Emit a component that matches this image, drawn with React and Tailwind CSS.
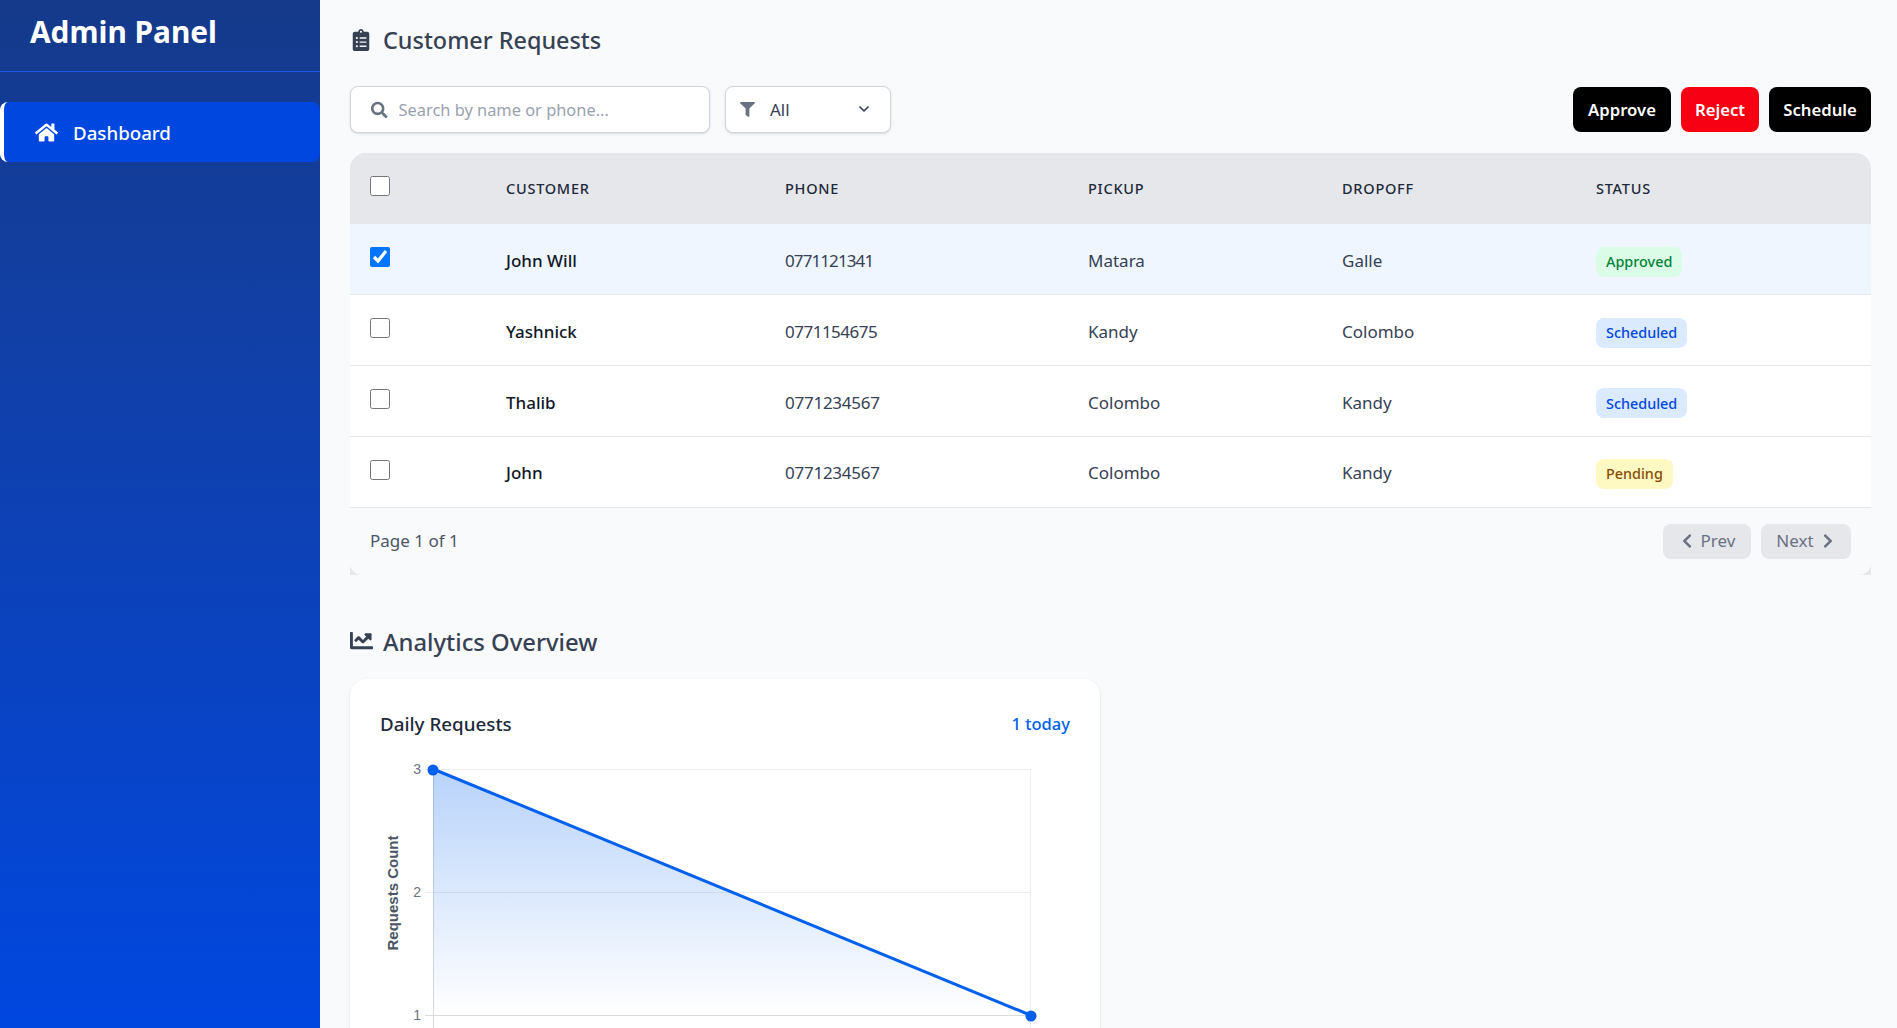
import React from "react";
import { FaClipboardList, FaSearch, FaFilter, FaHome, FaChartLine, FaChevronLeft, FaChevronRight } from "react-icons/fa";
import { ChevronDown } from "lucide-react";

const rows = [
  { name: "John Will", phone: "0771121341", phoneClass: "tracking-[-0.9px]", pickup: "Matara", dropoff: "Galle", status: "Approved", selected: true },
  { name: "Yashnick", phone: "0771154675", phoneClass: "tracking-[-0.5px]", pickup: "Kandy", dropoff: "Colombo", status: "Scheduled" },
  { name: "Thalib", phone: "0771234567", phoneClass: "tracking-[-0.25px]", pickup: "Colombo", dropoff: "Kandy", status: "Scheduled" },
  { name: "John", phone: "0771234567", phoneClass: "tracking-[-0.25px]", pickup: "Colombo", dropoff: "Kandy", status: "Pending" },
];

const badge = {
  Approved: "bg-green-100 text-green-700",
  Scheduled: "bg-[#dbeafe] text-[#0047e0]",
  Pending: "bg-yellow-100 text-yellow-800",
};

function Chart() {
  return (
    <svg width="690" height="330" className="block" viewBox="0 -10 690 330">
      <defs>
        <linearGradient id="fill" x1="0" y1="0" x2="0" y2="1">
          <stop offset="0" stopColor="#0060ee" stopOpacity="0.28" />
          <stop offset="1" stopColor="#0060ee" stopOpacity="0" />
        </linearGradient>
      </defs>
      <g stroke="#eceef2" strokeWidth="1">
        <line x1="45" y1="5.5" x2="650" y2="5.5" />
        <line x1="45" y1="128.5" x2="650" y2="128.5" />
        <line x1="650.5" y1="5" x2="650.5" y2="320" />
      </g>
      <line x1="45" y1="251.5" x2="650" y2="251.5" stroke="#d8dade" />
      <line x1="53.5" y1="5" x2="53.5" y2="320" stroke="#d8dade" />
      <polygon points="53,5 650,251 53,251" fill="url(#fill)" />
      <line x1="53" y1="5" x2="650" y2="251" stroke="#0060ee" strokeWidth="3" />
      <circle cx="53" cy="6" r="5.5" fill="#0060ee" />
      <circle cx="651" cy="252" r="5.5" fill="#0060ee" />
      <g fill="#6b7280" fontSize="14" fontFamily="'Liberation Sans', Arial, sans-serif" textAnchor="end">
        <text x="41" y="10">3</text>
        <text x="41" y="133">2</text>
        <text x="41" y="256">1</text>
      </g>
      <text
        transform="translate(18 129) rotate(-90)"
        textAnchor="middle"
        fill="#4b5563"
        fontSize="15"
        fontWeight="700"
        fontFamily="'Liberation Sans', Arial, sans-serif"
      >
        Requests Count
      </text>
    </svg>
  );
}

export default function App() {
  return (
    <div className="flex h-screen overflow-hidden bg-gray-50 font-['Noto_Sans','Open_Sans',sans-serif]">
      <aside className="w-[320px] shrink-0 bg-gradient-to-b from-[#153a8b] to-[#0047e0] text-white">
        <div className="h-[72px] border-b border-[#1a5ce6] pl-[30px] pt-[12px]">
          <h1 className="text-[29.8px] leading-[40px] font-bold">Admin Panel</h1>
        </div>
        <nav className="pt-[30px]">
          <div className="flex h-[60px] items-center gap-[15px] rounded-lg border-l-4 border-white bg-[#0047e0] pl-[31px] text-[18.7px] font-medium">
            <FaHome className="text-[23px]" />
            <span className="translate-y-[1px]">Dashboard</span>
          </div>
        </nav>
      </aside>

      <main className="min-w-0 flex-1 pl-[30px] pr-[26px]">
        <div className="flex h-[80px] items-center gap-[11px] text-gray-700">
          <FaClipboardList className="text-[22px]" />
          <h2 className="translate-y-[1px] text-[23.4px] font-medium">Customer Requests</h2>
        </div>

        <div className="mt-[6px] flex h-[47px] items-center">
          <div className="flex h-[47px] w-[360px] items-center gap-[11px] rounded-lg border border-gray-300 bg-white pl-[20px] shadow-sm">
            <FaSearch className="text-[18px] text-gray-500" />
            <input
              className="w-full translate-y-[1px] bg-transparent text-[16.4px] text-gray-700 outline-none placeholder:text-gray-400"
              placeholder="Search by name or phone..."
            />
          </div>
          <div className="relative ml-[15px] h-[47px] w-[166px]">
            <FaFilter className="pointer-events-none absolute left-[15px] top-[16px] text-[15px] text-gray-500" />
            <select className="h-full w-full appearance-none rounded-lg border border-gray-300 bg-white pl-[44px] pr-[16px] text-[17px] text-gray-700 shadow-sm outline-none">
              <option>All</option>
            </select>
            <ChevronDown strokeWidth={2.6} className="pointer-events-none absolute right-[19px] top-[15px] h-[16px] w-[16px] text-gray-700" />
          </div>
          <div className="ml-auto flex gap-[10px]">
            <button className="h-[45px] w-[98px] rounded-lg bg-black text-[16.7px] font-semibold text-white">Approve</button>
            <button className="h-[45px] w-[78px] rounded-lg bg-[#f80014] text-[16.7px] font-semibold text-white">Reject</button>
            <button className="h-[45px] w-[102px] rounded-lg bg-black text-[16.7px] font-semibold text-white">Schedule</button>
          </div>
        </div>

        <div className="mt-[20px] overflow-hidden rounded-t-[16px] bg-gray-200">
          <table className="w-full table-fixed border-collapse">
            <colgroup>
              <col className="w-[136px]" />
              <col className="w-[279px]" />
              <col className="w-[303px]" />
              <col className="w-[254px]" />
              <col className="w-[254px]" />
              <col />
            </colgroup>
            <thead className="bg-gray-200">
              <tr className="h-[71px] text-left text-[14.5px] tracking-[0.75px] text-gray-800 uppercase">
                <th className="pl-[20px]"><input type="checkbox" className="block h-5 w-5 -translate-y-[3px]" /></th>
                <th className="pl-[20px] font-medium">Customer</th>
                <th className="pl-[20px] font-medium">Phone</th>
                <th className="pl-[20px] font-medium">Pickup</th>
                <th className="pl-[20px] font-medium">Dropoff</th>
                <th className="pl-[20px] font-medium">Status</th>
              </tr>
            </thead>
            <tbody className="text-[17px] text-gray-700">
              {rows.map((r) => (
                <tr key={r.name} className={`h-[70.75px] border-b border-gray-200 ${r.selected ? "bg-blue-50" : "bg-white"}`}>
                  <td className="pl-[20px]"><input type="checkbox" defaultChecked={!!r.selected} className="block h-5 w-5 -translate-y-[2px]" /></td>
                  <td className="pl-[20px] pt-[3px] font-medium text-gray-900">{r.name}</td>
                  <td className={`pl-[20px] pt-[3px] ${r.phoneClass}`}>{r.phone}</td>
                  <td className="pl-[20px] pt-[3px]">{r.pickup}</td>
                  <td className="pl-[20px] pt-[3px]">{r.dropoff}</td>
                  <td className="pl-[20px] pt-[5px]">
                    <span className={`inline-flex h-[30px] items-center rounded-lg px-[10px] text-[14.4px] font-medium ${badge[r.status]}`}>{r.status}</span>
                  </td>
                </tr>
              ))}
            </tbody>
          </table>
          <div className="flex h-[67px] items-center justify-between rounded-b-[12px] bg-gray-50 px-[20px]">
            <span className="text-[17px] text-gray-600">Page 1 of 1</span>
            <div className="flex gap-[10px]">
              <button className="flex h-[35px] w-[88px] items-center justify-center gap-[6px] rounded-lg bg-gray-200 text-[17px] text-gray-500">
                <FaChevronLeft className="text-[16px]" /> Prev
              </button>
              <button className="flex h-[35px] w-[90px] items-center justify-center gap-[6px] rounded-lg bg-gray-200 text-[17px] text-gray-500">
                Next <FaChevronRight className="text-[16px]" />
              </button>
            </div>
          </div>
        </div>

        <div className="mt-[45px] flex h-[46px] items-center gap-[10px] text-gray-700">
          <FaChartLine className="-translate-y-[2px] text-[23px]" />
          <h2 className="text-[23.8px] font-medium">Analytics Overview</h2>
        </div>

        <div className="mt-[13px] w-[750px] rounded-2xl bg-white px-[30px] pt-[31px] shadow-sm">
          <div className="flex items-center justify-between">
            <h3 className="text-[18.8px] font-medium text-gray-800">Daily Requests</h3>
            <span className="translate-y-[1px] text-[16.5px] font-medium text-[#0060ee]">1 today</span>
          </div>
          <div className="mt-[16px]">
            <Chart />
          </div>
        </div>
      </main>
    </div>
  );
}
